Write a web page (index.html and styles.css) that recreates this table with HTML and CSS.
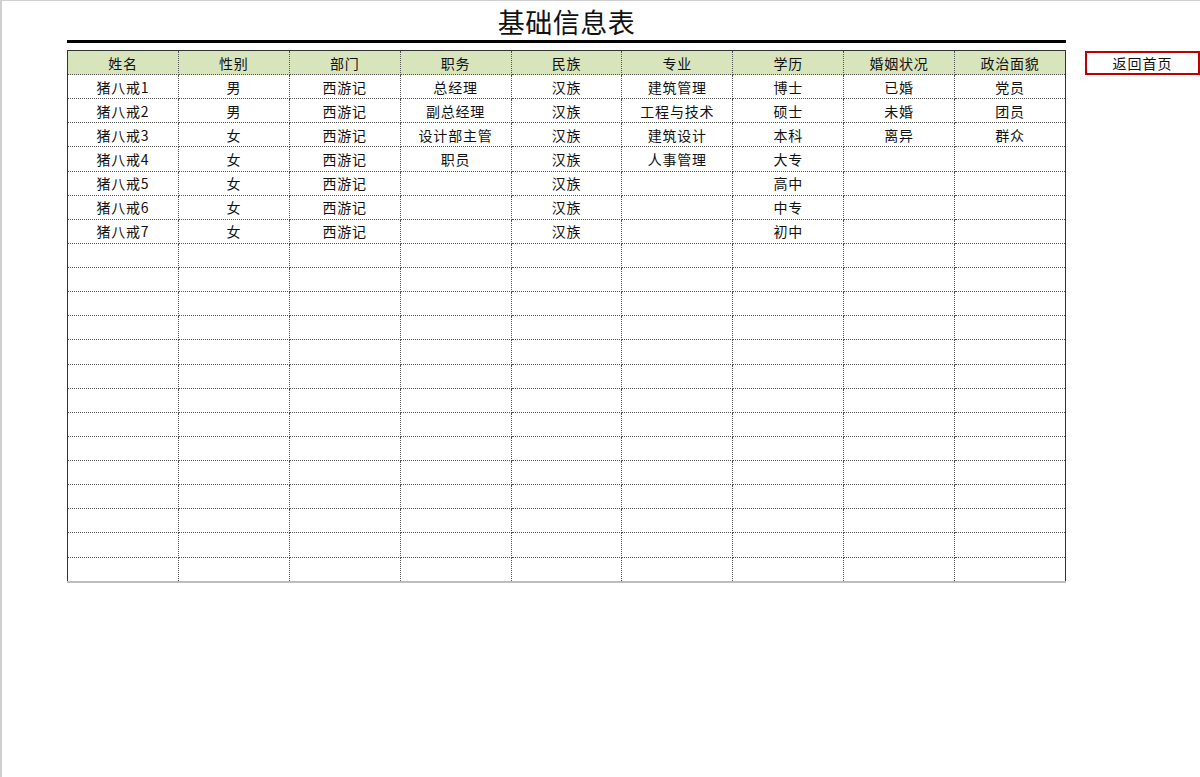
FILE: index.html
```html
<!DOCTYPE html>
<html lang="zh-CN">
<head>
<meta charset="utf-8">
<title>基础信息表</title>
<link rel="stylesheet" href="styles.css">
</head>
<body>
<div class="page">
  <div class="sheet">
    <h1 class="title">基础信息表</h1>
    <table class="info">
      <thead>
        <tr><th>姓名</th><th>性别</th><th>部门</th><th>职务</th><th>民族</th><th>专业</th><th>学历</th><th>婚姻状况</th><th>政治面貌</th></tr>
      </thead>
      <tbody>
        <tr><td>猪八戒1</td><td>男</td><td>西游记</td><td>总经理</td><td>汉族</td><td>建筑管理</td><td>博士</td><td>已婚</td><td>党员</td></tr>
        <tr><td>猪八戒2</td><td>男</td><td>西游记</td><td>副总经理</td><td>汉族</td><td>工程与技术</td><td>硕士</td><td>未婚</td><td>团员</td></tr>
        <tr><td>猪八戒3</td><td>女</td><td>西游记</td><td>设计部主管</td><td>汉族</td><td>建筑设计</td><td>本科</td><td>离异</td><td>群众</td></tr>
        <tr><td>猪八戒4</td><td>女</td><td>西游记</td><td>职员</td><td>汉族</td><td>人事管理</td><td>大专</td><td></td><td></td></tr>
        <tr><td>猪八戒5</td><td>女</td><td>西游记</td><td></td><td>汉族</td><td></td><td>高中</td><td></td><td></td></tr>
        <tr><td>猪八戒6</td><td>女</td><td>西游记</td><td></td><td>汉族</td><td></td><td>中专</td><td></td><td></td></tr>
        <tr><td>猪八戒7</td><td>女</td><td>西游记</td><td></td><td>汉族</td><td></td><td>初中</td><td></td><td></td></tr>
        <tr><td></td><td></td><td></td><td></td><td></td><td></td><td></td><td></td><td></td></tr>
        <tr><td></td><td></td><td></td><td></td><td></td><td></td><td></td><td></td><td></td></tr>
        <tr><td></td><td></td><td></td><td></td><td></td><td></td><td></td><td></td><td></td></tr>
        <tr><td></td><td></td><td></td><td></td><td></td><td></td><td></td><td></td><td></td></tr>
        <tr><td></td><td></td><td></td><td></td><td></td><td></td><td></td><td></td><td></td></tr>
        <tr><td></td><td></td><td></td><td></td><td></td><td></td><td></td><td></td><td></td></tr>
        <tr><td></td><td></td><td></td><td></td><td></td><td></td><td></td><td></td><td></td></tr>
        <tr><td></td><td></td><td></td><td></td><td></td><td></td><td></td><td></td><td></td></tr>
        <tr><td></td><td></td><td></td><td></td><td></td><td></td><td></td><td></td><td></td></tr>
        <tr><td></td><td></td><td></td><td></td><td></td><td></td><td></td><td></td><td></td></tr>
        <tr><td></td><td></td><td></td><td></td><td></td><td></td><td></td><td></td><td></td></tr>
        <tr><td></td><td></td><td></td><td></td><td></td><td></td><td></td><td></td><td></td></tr>
        <tr><td></td><td></td><td></td><td></td><td></td><td></td><td></td><td></td><td></td></tr>
        <tr><td></td><td></td><td></td><td></td><td></td><td></td><td></td><td></td><td></td></tr>
      </tbody>
    </table>
  </div>
  <a class="back" href="#">返回首页</a>
</div>
</body>
</html>
```

FILE: styles.css
```css
html, body {
  margin: 0;
  padding: 0;
  background: #fff;
}
body {
  height: 777px;
  box-sizing: border-box;
  border-top: 1px solid #cfcfcf;
  border-left: 2px solid #cfcfcf;
  font-family: "Noto Sans CJK SC", "Noto Sans", sans-serif;
  color: #111;
}
.page {
  display: flex;
  align-items: flex-start;
  padding-left: 65px;
}
.sheet {
  width: 999px;
}
.title {
  margin: 0;
  height: 39px;
  line-height: 41px;
  font-size: 27px;
  font-weight: 400;
  text-align: center;
  letter-spacing: 0.5px;
  border-bottom: 3px solid #000;
}
.info {
  margin-top: 7px;
  width: 999px;
  border-collapse: collapse;
  table-layout: fixed;
  font-size: 14px;
  letter-spacing: 0.8px;
}
.info th,
.info td {
  height: 23.14px;
  padding: 0;
  text-align: center;
  vertical-align: middle;
  border: 1px dotted #555;
  line-height: 20px;
  white-space: nowrap;
}
.info th {
  height: 23px;
  background: #d8e4bc;
  font-weight: 400;
  border-top: 1px solid #333;
}
.info tr > :first-child {
  border-left: 1px solid #333;
}
.info tr > :last-child {
  border-right: 1px solid #333;
}
.info tbody tr:last-child td {
  border-bottom: 2px solid #bdbdbd;
}
.back {
  display: block;
  margin-left: 19px;
  margin-top: 50px;
  width: 111px;
  height: 20px;
  line-height: 20px;
  border: 2px solid #c00000;
  text-align: center;
  font-size: 14px;
  color: #111;
  text-decoration: none;
  letter-spacing: 1px;
}
```
